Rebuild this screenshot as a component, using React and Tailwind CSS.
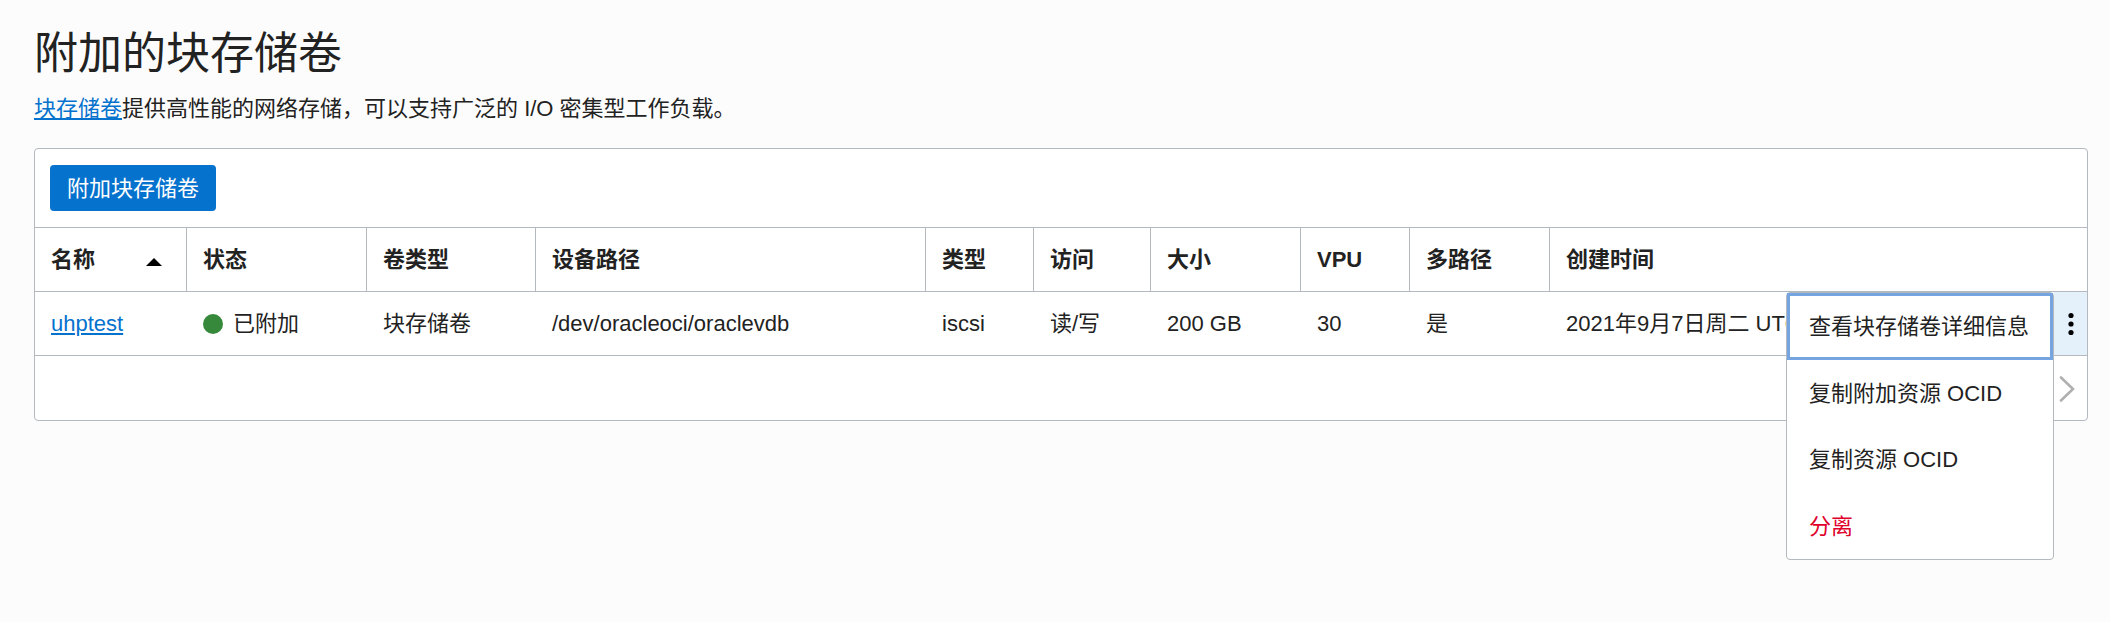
import { useState } from "react";

const columns = [
  { key: "name", label: "名称", width: "w-[152px]", sorted: true },
  { key: "status", label: "状态", width: "w-[180px]" },
  { key: "kind", label: "卷类型", width: "w-[169px]" },
  { key: "path", label: "设备路径", width: "w-[390px]" },
  { key: "type", label: "类型", width: "w-[108px]" },
  { key: "access", label: "访问", width: "w-[117px]" },
  { key: "size", label: "大小", width: "w-[150px]" },
  { key: "vpu", label: "VPU", width: "w-[109px]" },
  { key: "multipath", label: "多路径", width: "w-[140px]" },
  { key: "created", label: "创建时间", last: true },
];

const volumes = [
  {
    name: "uhptest",
    status: "已附加",
    kind: "块存储卷",
    path: "/dev/oracleoci/oraclevdb",
    type: "iscsi",
    access: "读/写",
    size: "200 GB",
    vpu: "30",
    multipath: "是",
    created: "2021年9月7日周二 UTC",
  },
];

const actions = [
  { label: "查看块存储卷详细信息", focused: true },
  { label: "复制附加资源 OCID" },
  { label: "复制资源 OCID" },
  { label: "分离", danger: true },
];

function SortArrow() {
  return (
    <svg className="mt-1 h-2 w-4" viewBox="0 0 16 8" aria-hidden="true">
      <path d="M8 0 16 8H0Z" fill="#000" />
    </svg>
  );
}

function ActionMenu() {
  return (
    <div
      role="menu"
      className="absolute top-0 right-full z-10 flex h-[268px] w-[268px] flex-col rounded border border-[#b4b9c0] bg-white"
    >
      {actions.map((a) => (
        <button
          key={a.label}
          type="button"
          role="menuitem"
          className={
            "flex flex-1 items-center px-[22px] pt-0.5 text-left whitespace-nowrap " +
            (a.focused ? "outline-3 -outline-offset-3 outline-[#74a5e0] " : "") +
            (a.danger ? "text-[#e0002b]" : "")
          }
        >
          {a.label}
        </button>
      ))}
    </div>
  );
}

function Cell({ column, volume }) {
  if (column.key === "name") {
    return (
      <a href="#volume" className="text-[#0572ce] underline underline-offset-2">
        {volume.name}
      </a>
    );
  }
  if (column.key === "status") {
    return (
      <span className="flex items-center gap-2.5">
        <span className="size-5 rounded-full bg-[#36883a]" />
        {volume.status}
      </span>
    );
  }
  return volume[column.key];
}

export default function App() {
  const [open, setOpen] = useState(true);
  return (
    <main className="min-h-screen bg-[#fcfcfc] pt-[22px] pr-[22px] pb-10 pl-[34px] font-['Liberation_Sans','Noto_Sans_CJK_SC',sans-serif] text-[22px] leading-8 text-[#222]">
      <h1 className="text-[44px] leading-[64px]">附加的块存储卷</h1>
      <p className="mt-[7px]">
        <a href="#block-volumes" className="text-[#0572ce] underline underline-offset-2">
          块存储卷
        </a>
        提供高性能的网络存储，可以支持广泛的 I/O 密集型工作负载。
      </p>
      <section className="mt-[23px] rounded border border-[#b4b9c0] bg-white">
        <div className="border-b border-[#b4b9c0] p-4 pl-[15px]">
          <button
            type="button"
            className="block rounded bg-[#0572ce] px-[17px] pt-2 pb-1.5 text-white"
          >
            附加块存储卷
          </button>
        </div>
        <table className="w-full table-fixed border-separate border-spacing-0 text-left">
          <thead>
            <tr className="h-16">
              {columns.map((c) => (
                <th
                  key={c.key}
                  scope="col"
                  className={
                    "border-b border-[#b4b9c0] px-4 py-0 font-bold whitespace-nowrap " +
                    (c.last ? "" : "border-r " + c.width)
                  }
                >
                  {c.sorted ? (
                    <span className="flex items-center justify-between pr-2">
                      {c.label}
                      <SortArrow />
                    </span>
                  ) : (
                    c.label
                  )}
                </th>
              ))}
              <th className="w-[33px] border-b border-[#b4b9c0] p-0" aria-label="操作" />
            </tr>
          </thead>
          <tbody>
            {volumes.map((v) => (
              <tr key={v.name} className="h-16">
                {columns.map((c) => (
                  <td
                    key={c.key}
                    className="border-b border-[#b4b9c0] px-4 py-0 whitespace-nowrap"
                  >
                    <Cell column={c} volume={v} />
                  </td>
                ))}
                <td className="border-b border-[#b4b9c0] p-0">
                  <div className="relative">
                    <button
                      type="button"
                      aria-label="操作"
                      aria-expanded={open}
                      onClick={() => setOpen(!open)}
                      className="flex h-[63px] w-full items-center justify-center bg-[#e4f1fb]"
                    >
                      <svg className="h-6 w-2" viewBox="0 0 8 24" aria-hidden="true">
                        <circle cx="4" cy="3.5" r="2.6" />
                        <circle cx="4" cy="12" r="2.6" />
                        <circle cx="4" cy="20.5" r="2.6" />
                      </svg>
                    </button>
                    {open && <ActionMenu />}
                  </div>
                </td>
              </tr>
            ))}
          </tbody>
        </table>
        <div className="flex h-16 items-center justify-end pr-3 pt-0.5">
          <button type="button" aria-label="下一页" className="block">
            <svg className="h-[26px] w-4" viewBox="0 0 16 26" fill="none" aria-hidden="true">
              <path
                d="M2 1.5 14 13 2 24.5"
                stroke="#b0b0b0"
                strokeWidth="2.6"
                strokeLinecap="round"
              />
            </svg>
          </button>
        </div>
      </section>
    </main>
  );
}
